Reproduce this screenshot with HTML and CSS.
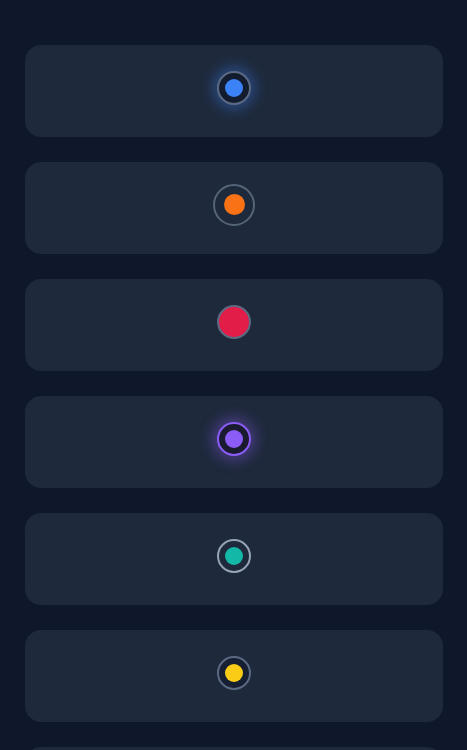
FILE: index.html
```html
<!DOCTYPE html>
<html lang="en">
<head>
    <meta charset="UTF-8">
    <link rel="stylesheet" href="styles.css">
    <title>Radio states</title>
</head>
<body>
    <div class="list">
        <div class="card"><span class="radio radio-focus"><span class="dot dot-blue"></span></span></div>
        <div class="card"><span class="radio radio-large"><span class="dot dot-orange"></span></span></div>
        <div class="card"><span class="radio radio-filled"></span></div>
        <div class="card"><span class="radio radio-purple"><span class="dot dot-purple"></span></span></div>
        <div class="card"><span class="radio radio-light"><span class="dot dot-teal"></span></span></div>
        <div class="card"><span class="radio radio-dark"><span class="dot dot-yellow"></span></span></div>
        <div class="card"></div>
    </div>
</body>
</html>
```

FILE: styles.css
```css
body {
    margin: 0;
    background-color: #0f172a;
    font-family: 'Inter', sans-serif;
    height: 100vh;
    overflow: hidden;
}

.list {
    display: flex;
    flex-direction: column;
    gap: 25px;
    padding: 45px 24px 0 25px;
}

.card {
    flex: none;
    height: 92px;
    background-color: #1e293b;
    border-radius: 16px;
    display: flex;
    align-items: center;
    justify-content: center;
    padding-bottom: 7px;
    box-sizing: border-box;
}

.radio {
    width: 34px;
    height: 34px;
    border-radius: 50%;
    box-sizing: border-box;
    border: 2px solid #64748b;
    display: flex;
    align-items: center;
    justify-content: center;
}

.dot {
    width: 18px;
    height: 18px;
    border-radius: 50%;
}

.radio-focus {
    background-color: #131c2e;
    border-color: #5b6a82;
    box-shadow: 0 0 14px 4px rgba(59, 130, 246, 0.4);
}

.radio-large {
    width: 42px;
    height: 42px;
    border-color: #556479;
}

.radio-large .dot {
    width: 21px;
    height: 21px;
}

.radio-filled {
    background-color: #e11d48;
    border-color: #5b6a82;
}

.radio-purple {
    background-color: #1a1b30;
    border-color: #8b5cf6;
    box-shadow: 0 0 14px 5px rgba(139, 92, 246, 0.38);
}

.radio-light {
    border-color: #94a3b8;
}

.radio-dark {
    background-color: #172033;
    border-color: #5b6a82;
}

.dot-blue { background-color: #3b82f6; }
.dot-orange { background-color: #f97316; }
.dot-purple { background-color: #8b5cf6; }
.dot-teal { background-color: #14b8a6; }
.dot-yellow { background-color: #facc15; }
```
